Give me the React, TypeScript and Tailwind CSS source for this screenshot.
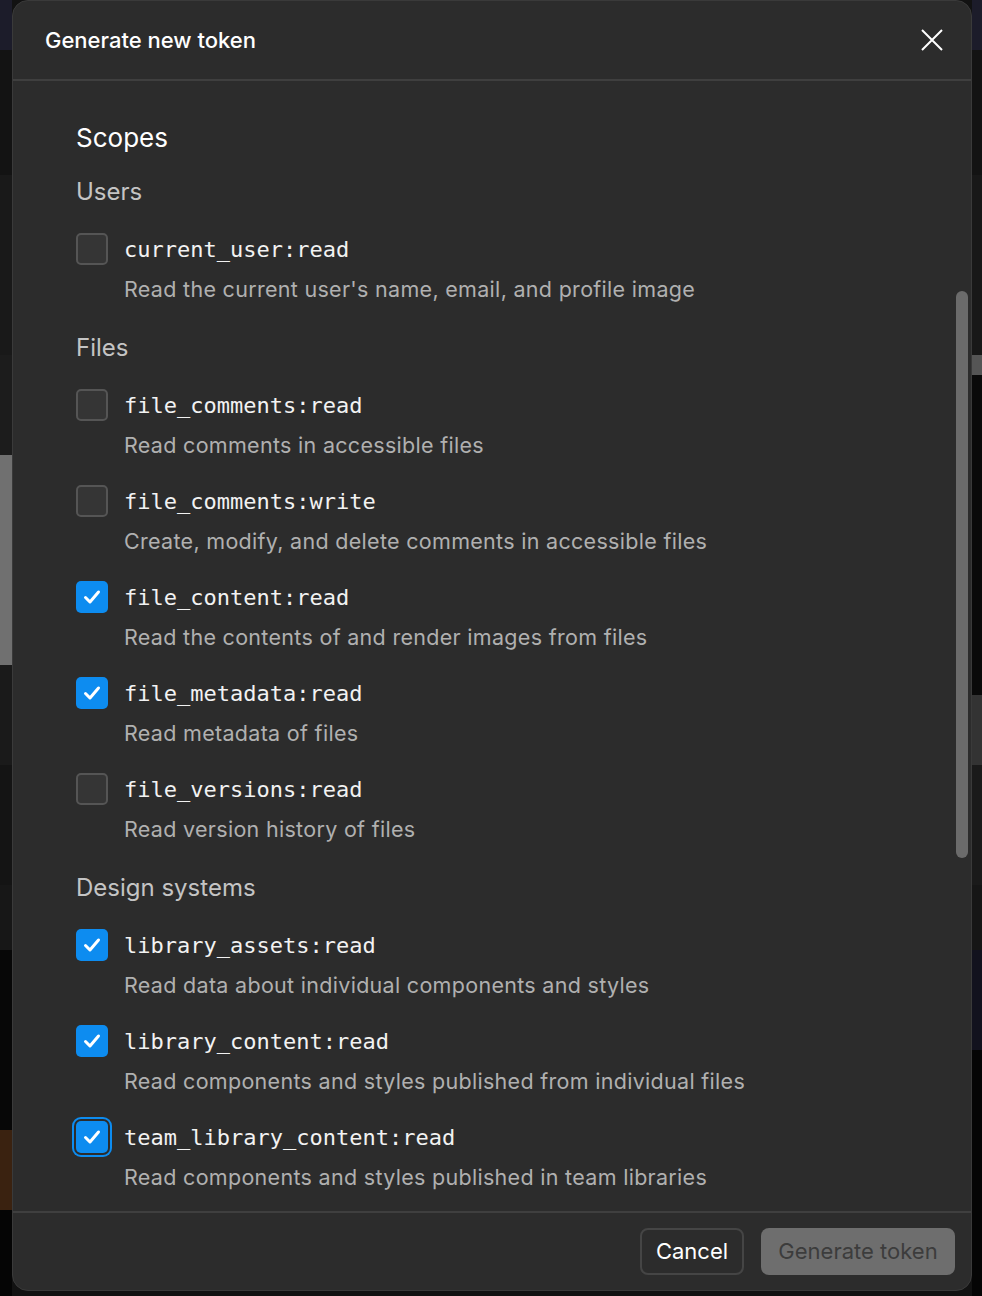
import React from 'react';

type Scope = { name: string; desc: string; checked?: boolean; focused?: boolean };
type Section = { title: string; scopes: Scope[] };

const sections: Section[] = [
  {
    title: 'Users',
    scopes: [{ name: 'current_user:read', desc: "Read the current user's name, email, and profile image" }],
  },
  {
    title: 'Files',
    scopes: [
      { name: 'file_comments:read', desc: 'Read comments in accessible files' },
      { name: 'file_comments:write', desc: 'Create, modify, and delete comments in accessible files' },
      { name: 'file_content:read', desc: 'Read the contents of and render images from files', checked: true },
      { name: 'file_metadata:read', desc: 'Read metadata of files', checked: true },
      { name: 'file_versions:read', desc: 'Read version history of files' },
    ],
  },
  {
    title: 'Design systems',
    scopes: [
      { name: 'library_assets:read', desc: 'Read data about individual components and styles', checked: true },
      { name: 'library_content:read', desc: 'Read components and styles published from individual files', checked: true },
      { name: 'team_library_content:read', desc: 'Read components and styles published in team libraries', checked: true, focused: true },
    ],
  },
];

function Checkbox({ checked, focused }: { checked?: boolean; focused?: boolean }) {
  if (!checked) {
    return <div className="w-8 h-8 shrink-0 rounded-[5px] border-2 border-[#555555] bg-[#353535]" />;
  }
  return (
    <div
      className={`w-8 h-8 shrink-0 rounded-[5px] bg-[#0d8cf0] flex items-center justify-center ${
        focused ? 'ring-2 ring-[#0d8cf0] ring-offset-2 ring-offset-[#2c2c2c]' : ''
      }`}
    >
      <svg width="22" height="22" viewBox="0 0 22 22" fill="none">
        <path d="M4.5 11.5l4.5 4.5 8.5-10" stroke="white" strokeWidth="3" strokeLinecap="round" strokeLinejoin="round" />
      </svg>
    </div>
  );
}

function ScopeRow({ scope }: { scope: Scope }) {
  return (
    <div className="flex flex-col">
      <div className="flex items-center gap-[16px] h-8">
        <Checkbox checked={scope.checked} focused={scope.focused} />
        <span className="text-[22px] text-[#f2f2f2] font-['DejaVu_Sans_Mono',monospace]">{scope.name}</span>
      </div>
      <p className="mt-[10px] pl-12 text-[21.5px] leading-[28px] text-[#b0b0b0] tracking-[0.3px]">{scope.desc}</p>
    </div>
  );
}

export default function App() {
  return (
    <div className="w-[982px] h-[1296px] overflow-hidden bg-[#121212] flex font-['Inter',sans-serif]">
      {/* left strip of blurred page */}
      <div className="w-3 shrink-0 flex flex-col">
        <div className="h-[50px] bg-[#1c1c2a]" />
        <div className="h-[125px] bg-[#131313]" />
        <div className="h-[180px] bg-[#191919]" />
        <div className="h-[100px] bg-[#1c1c1c]" />
        <div className="h-[210px] bg-[#707070]" />
        <div className="h-[100px] bg-[#1a1a1a]" />
        <div className="h-[120px] bg-[#141414]" />
        <div className="h-[65px] bg-[#171717]" />
        <div className="h-[180px] bg-[#070707]" />
        <div className="h-[80px] bg-[#3a2210]" />
        <div className="flex-1 bg-[#050505]" />
      </div>

      <div className="w-[960px] h-[1291px] shrink-0 rounded-[16px] border border-[#3a3a3a] bg-[#2c2c2c] flex flex-col overflow-hidden">
        <div className="h-[80px] shrink-0 flex items-center justify-between pl-8 pr-[28px] border-b-2 border-[#3f3f3f]">
          <h1 className="text-[22px] font-medium text-white">Generate new token</h1>
          <svg width="22" height="22" viewBox="0 0 22 22" fill="none">
            <path d="M1 1l20 20M21 1L1 21" stroke="white" strokeWidth="2" />
          </svg>
        </div>

        <div className="relative flex-1 overflow-hidden">
          <div className="pl-[63px] pt-[41px] flex flex-col">
            <h2 className="text-[26px] leading-8 text-white">Scopes</h2>
            {sections.map((section, i) => (
              <div key={section.title} className={`flex flex-col ${i === 0 ? 'mt-[24px]' : 'mt-[31px]'}`}>
                <h3 className="text-[24px] leading-[28px] text-[#c4c4c4]">{section.title}</h3>
                <div className="mt-[27px] flex flex-col gap-[26px]">
                  {section.scopes.map(s => (
                    <ScopeRow key={s.name} scope={s} />
                  ))}
                </div>
              </div>
            ))}
          </div>
          <div className="absolute right-[3px] top-[210px] w-3 h-[567px] rounded-full bg-[#6b6b6b]" />
        </div>

        <div className="h-[79px] shrink-0 border-t-2 border-[#3f3f3f] flex items-center justify-end gap-[17px] pr-4">
          <button className="h-[47px] w-[104px] rounded-[8px] border-2 border-[#454545] text-[22px] text-white">
            Cancel
          </button>
          <button className="h-[47px] w-[194px] rounded-[8px] bg-[#6e6e6e] text-[22px] text-[#3c3c3c]">
            Generate token
          </button>
        </div>
      </div>

      <div className="flex-1 flex flex-col">
        <div className="h-[50px] bg-[#1c1c2a]" />
        <div className="h-[125px] bg-[#131313]" />
        <div className="h-[180px] bg-[#181818]" />
        <div className="h-[20px] bg-[#555555]" />
        <div className="h-[320px] bg-[#0a0a0a]" />
        <div className="h-[70px] bg-[#333333]" />
        <div className="h-[120px] bg-[#1a1a1a]" />
        <div className="h-[65px] bg-[#161616]" />
        <div className="h-[100px] bg-[#12121e]" />
        <div className="flex-1 bg-[#050505]" />
      </div>
    </div>
  );
}
